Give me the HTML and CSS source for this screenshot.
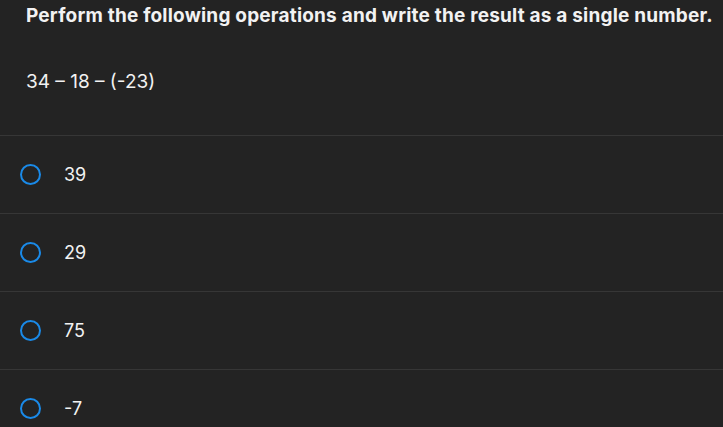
FILE: index.html
```html
<!DOCTYPE html>
<html>
<head>
<meta charset="utf-8">
<link rel="stylesheet" href="styles.css">
</head>
<body>
<div class="question">
  <div class="prompt">Perform the following operations and write the result as a single number.</div>
  <div class="expr">34 – 18 – (-23)</div>
</div>
<div class="options">
  <div class="option"><span class="radio"></span><span class="label">39</span></div>
  <div class="option"><span class="radio"></span><span class="label">29</span></div>
  <div class="option"><span class="radio"></span><span class="label">75</span></div>
  <div class="option"><span class="radio"></span><span class="label">-7</span></div>
</div>
</body>
</html>
```
FILE: styles.css
```css
html, body {
  margin: 0;
  padding: 0;
  background: #232323;
  color: #f2f2f2;
  font-family: "Inter", "Lato", sans-serif;
  overflow: hidden;
}
.question {
  padding: 3px 26px 0 26px;
  height: 135px;
  box-sizing: border-box;
}
.prompt {
  font-weight: 700;
  font-size: 19px;
  letter-spacing: 0.2px;
  line-height: 26px;
  white-space: nowrap;
}
.expr {
  margin-top: 40px;
  font-size: 19px;
  line-height: 26px;
}
.options {
  display: flex;
  flex-direction: column;
}
.option {
  border-top: 1px solid #363636;
  height: 77px;
  display: flex;
  align-items: center;
  padding-left: 20px;
  gap: 23px;
}
.radio {
  width: 17px;
  height: 17px;
  border: 2px solid #1a8ae8;
  border-radius: 50%;
  flex: none;
}
.label {
  font-size: 18px;
  line-height: 24px;
}
```
